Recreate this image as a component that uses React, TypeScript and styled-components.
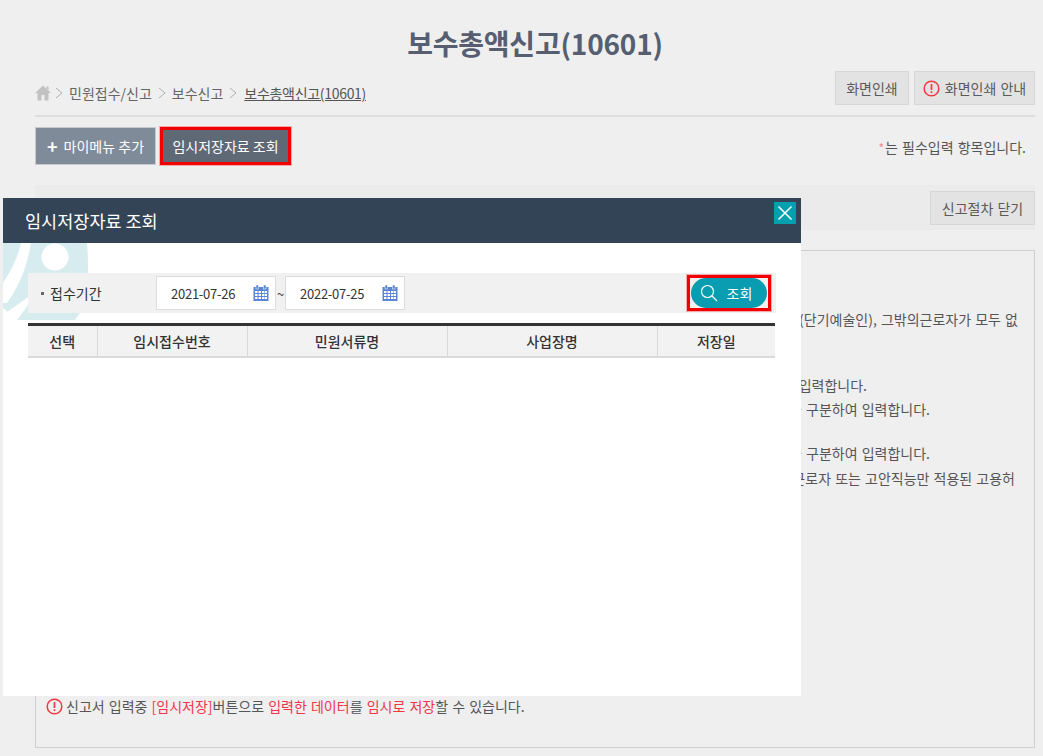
import React from 'react';
import styled, { createGlobalStyle } from 'styled-components';

const GlobalStyle = createGlobalStyle`
  html, body {
    margin: 0;
    padding: 0;
    background: #efefef;
  }
  * {
    box-sizing: border-box;
  }
  body {
    font-family: "Noto Sans CJK KR", "Noto Sans", sans-serif;
    font-size: 14px;
    color: #555;
  }
`;

const Page = styled.div`
  position: relative;
  width: 1043px;
  height: 756px;
  overflow: hidden;
  padding: 0 8px 0 35px;
  background: #efefef;
`;

const Title = styled.h1`
  margin: 0;
  height: 71px;
  padding-top: 22px;
  text-align: center;
  font-size: 28px;
  line-height: 42px;
  font-weight: 700;
  color: #565e70;
  letter-spacing: -0.2px;
`;

const TopRow = styled.div`
  display: flex;
  align-items: flex-start;
  justify-content: space-between;
  height: 46px;
  border-bottom: 2px solid #dedede;
`;

const Crumbs = styled.div`
  display: flex;
  align-items: center;
  gap: 6px;
  height: 44px;
  font-size: 14px;
  color: #666;
`;

const CurrentCrumb = styled.span`
  margin-left: 1px;
  color: #555;
  text-decoration: underline;
  letter-spacing: -0.3px;
`;

const GrayButton = styled.button`
  display: inline-flex;
  align-items: center;
  justify-content: center;
  gap: 5px;
  height: 34px;
  padding: 0;
  width: ${(p) => p.$w}px;
  background: #e3e3e3;
  border: 1px solid #d6d6d6;
  font: inherit;
  font-size: 14px;
  word-spacing: 1px;
  color: #5a5a5a;
`;

const PrintButtons = styled.div`
  display: flex;
  gap: 5px;
`;

const ActionRow = styled.div`
  display: flex;
  align-items: center;
  justify-content: space-between;
  height: 68px;
  padding: 0 9px 10px 0;
`;

const ActionButtons = styled.div`
  display: flex;
  align-items: center;
  gap: 3px;
`;

const MenuButton = styled.button`
  display: inline-flex;
  align-items: center;
  justify-content: center;
  gap: 6px;
  width: 121px;
  height: 38px;
  padding: 0;
  background: #7f8b99;
  border: 1px solid #c6c9cd;
  color: #fff;
  font: inherit;
  font-size: 14px;
`;

const Plus = styled.span`
  font-size: 18px;
  line-height: 18px;
  font-weight: 700;
`;

const TempButton = styled.button`
  width: 133px;
  height: 40px;
  padding: 0;
  background: #5f6875;
  border: 4px solid #f00000;
  outline: 1px solid #f5a9a9;
  outline-offset: -1px;
  color: #fff;
  font: inherit;
  font-size: 14px;
`;

const Required = styled.div`
  margin-top: 2px;
  font-size: 14px;
  word-spacing: 1px;
  color: #555;
`;

const Star = styled.span`
  margin-right: 1px;
  font-size: 12px;
  color: #ee8a96;
`;

const StepBar = styled.div`
  display: flex;
  align-items: center;
  justify-content: flex-end;
  height: 45px;
  background: #ebebeb;
`;

const ContentBox = styled.div`
  display: flex;
  flex-direction: column;
  height: 498px;
  margin-top: 20px;
  border: 1px solid #ccd0d0;
  padding-bottom: 31px;
`;

const Line = styled.div`
  display: flex;
  justify-content: flex-end;
  white-space: nowrap;
  margin-top: ${(p) => p.$top}px;
  padding-right: ${(p) => p.$end}px;
  font-size: 14px;
  word-spacing: 1px;
  line-height: 20px;
  color: #555;
`;

const BottomNote = styled.div`
  display: flex;
  align-items: center;
  gap: 3px;
  margin-top: auto;
  padding-left: 10px;
  font-size: 14px;
  word-spacing: 1px;
  line-height: 20px;
  color: #555;
`;

const Red = styled.span`
  color: #f0344a;
`;

const Modal = styled.div`
  position: absolute;
  left: 3px;
  top: 198px;
  width: 798px;
  height: 498px;
  background: #fff;
`;

const ModalHead = styled.div`
  display: flex;
  align-items: center;
  justify-content: space-between;
  height: 45px;
  padding: 0 5px 0 22px;
  background: #334457;
  color: #fff;
  font-size: 17.5px;
`;

const CloseButton = styled.button`
  display: flex;
  align-items: center;
  justify-content: center;
  width: 22px;
  height: 22px;
  margin-top: -15px;
  padding: 0;
  border: 0;
  background: #00a0b0;
`;

const ModalBody = styled.div`
  position: relative;
  padding: 30px 25px 0;
`;

const Watermark = styled.svg`
  position: absolute;
  left: 0;
  top: 0;
`;

const SearchBar = styled.div`
  position: relative;
  display: flex;
  align-items: center;
  height: 40px;
  padding-right: 5px;
  background: #f1f1f1;
`;

const SearchLabel = styled.div`
  display: flex;
  align-items: center;
  gap: 6px;
  width: 128px;
  padding-left: 13px;
  font-size: 14px;
  color: #333;
`;

const Bullet = styled.i`
  width: 3px;
  height: 3px;
  background: #666;
`;

const DateBox = styled.div`
  display: flex;
  align-items: center;
  justify-content: space-between;
  width: 120px;
  height: 34px;
  padding: 0 6px 0 14px;
  background: #fff;
  border: 1px solid #dcdcdc;
  font-size: 13px;
  letter-spacing: -0.25px;
  color: #333;
`;

const Tilde = styled.span`
  width: 9px;
  text-align: center;
  font-size: 13px;
  color: #444;
`;

const SearchFrame = styled.div`
  display: flex;
  align-items: center;
  justify-content: center;
  width: 84px;
  height: 36px;
  margin-left: auto;
  border: 3px solid #f00000;
  outline: 1px solid #f5a9a9;
`;

const SearchButton = styled.button`
  display: flex;
  align-items: center;
  justify-content: center;
  gap: 9px;
  width: 76px;
  height: 30px;
  padding: 0 6px 0 0;
  border: 0;
  border-radius: 15px;
  background: #0a9cb0;
  color: #fff;
  font: inherit;
  font-size: 14px;
`;

const Table = styled.table`
  position: relative;
  width: 747px;
  margin-top: 10px;
  border-collapse: collapse;
  table-layout: fixed;
  border-top: 3px solid #333;
`;

const HeadCell = styled.th`
  height: 32px;
  width: ${(p) => p.$w}px;
  padding: 0;
  background: #f2f2f2;
  border-bottom: 2px solid #dadada;
  border-right: 1px solid #dadada;
  font-size: 14px;
  font-weight: 500;
  color: #333;
  &:last-child {
    border-right: 0;
  }
`;

const HomeIcon = () => (
  <svg width="16" height="16" viewBox="0 0 16 16" style={{ marginRight: -2 }}>
    <path d="M8 .5 0 8h2.500v7.500h4V10h3v5.500h4V8H16z" fill="#c2c2c2" />
    <path d="M11.500 1.500h2v4l-2-2z" fill="#c2c2c2" />
  </svg>
);

const Chevron = () => (
  <svg width="8" height="12" viewBox="0 0 8 12">
    <path d="M1 1l6 5-6 5" fill="none" stroke="#b0b0b0" strokeWidth="1" />
  </svg>
);

const AlertIcon = ({ size = 17 }: { size?: number }) => (
  <svg width={size} height={size} viewBox="0 0 17 17">
    <circle cx="8.500" cy="8.500" r="7.300" fill="none" stroke="#ee3a44" strokeWidth="1.500" />
    <path d="M8.500 4v6" stroke="#ee3a44" strokeWidth="1.700" />
    <path d="M8.500 11.300v1.700" stroke="#ee3a44" strokeWidth="1.700" />
  </svg>
);

const CalendarIcon = () => (
  <svg width="16" height="16" viewBox="0 0 16 16">
    <rect x="0.500" y="2" width="15" height="14" fill="#5b84d6" />
    <rect x="3" y="0" width="2.500" height="4" fill="#5b84d6" stroke="#fff" strokeWidth="0.500" />
    <rect x="10.500" y="0" width="2.500" height="4" fill="#5b84d6" stroke="#fff" strokeWidth="0.500" />
    <path
      d="M2 6h2.500v2H2zM5.500 6H8v2H5.500zM9 6h2.500v2H9zM12 6h2v2h-2zM2 9h2.500v2H2zM5.500 9H8v2H5.500zM9 9h2.500v2H9zM12 9h2v2h-2zM2 12h2.500v2H2zM5.500 12H8v2H5.500zM9 12h2.500v2H9zM12 12h2v2h-2z"
      fill="#fff"
    />
  </svg>
);

const SearchIcon = () => (
  <svg width="18" height="18" viewBox="0 0 18 18">
    <circle cx="7.500" cy="7.500" r="6" fill="none" stroke="#fff" strokeWidth="1.200" />
    <path d="M12 12l5 5" stroke="#fff" strokeWidth="1.200" />
  </svg>
);

export default function App() {
  return (
    <Page>
      <GlobalStyle />
      <Title>보수총액신고(10601)</Title>
      <TopRow>
        <Crumbs>
          <HomeIcon />
          <Chevron />
          <span>민원접수/신고</span>
          <Chevron />
          <span>보수신고</span>
          <Chevron />
          <CurrentCrumb>보수총액신고(10601)</CurrentCrumb>
        </Crumbs>
        <PrintButtons>
          <GrayButton $w={74}>화면인쇄</GrayButton>
          <GrayButton $w={121}>
            <AlertIcon />
            화면인쇄 안내
          </GrayButton>
        </PrintButtons>
      </TopRow>
      <ActionRow>
        <ActionButtons>
          <MenuButton>
            <Plus>+</Plus>
            마이메뉴 추가
          </MenuButton>
          <TempButton>임시저장자료 조회</TempButton>
        </ActionButtons>
        <Required>
          <Star>*</Star>는 필수입력 항목입니다.
        </Required>
      </ActionRow>
      <StepBar>
        <GrayButton $w={105}>신고절차 닫기</GrayButton>
      </StepBar>
      <ContentBox>
        <Line $top={58} $end={16}>
          사업장에 일반근로자, 일용근로자, 예술인(단기예술인), 그밖의근로자가 모두 없
        </Line>
        <Line $top={46} $end={167}>
          보수총액은 해당 연도에 지급한 금액을 입력합니다.
        </Line>
        <Line $top={4} $end={104}>
          일반근로자 보수총액은 고용보험과 산재보험을 구분하여 입력합니다.
        </Line>
        <Line $top={24} $end={104}>
          그밖의근로자 보수총액은 고용보험과 산재보험을 구분하여 입력합니다.
        </Line>
        <Line $top={5} $end={19}>
          일용근로자 또는 고안직능만 적용된 고용허
        </Line>
        <BottomNote>
          <AlertIcon />
          <span>
            신고서 입력중 <Red>[임시저장]</Red>버튼으로 <Red>입력한 데이터</Red>를{' '}
            <Red>임시로 저장</Red>할 수 있습니다.
          </span>
        </BottomNote>
      </ContentBox>

      <Modal>
        <ModalHead>
          <span>임시저장자료 조회</span>
          <CloseButton aria-label="닫기">
            <svg width="16" height="16" viewBox="0 0 16 16">
              <path d="M1.500 1.500l13 13M14.500 1.500l-13 13" stroke="#fff" strokeWidth="1.500" />
            </svg>
          </CloseButton>
        </ModalHead>
        <ModalBody>
          <Watermark width="88" height="80" viewBox="0 0 88 80">
            <path d="M0 0H84C86 25 85 50 82 62L72 77H15L0 65Z" fill="#d6ecef" />
            <path d="M18 0H28C24 25 15 45 4 60H0V40C8 28 15 14 18 0Z" fill="#fff" />
            <path d="M0 72L28 52V58L15 76 0 80Z" fill="#fff" />
            <circle cx="52" cy="14" r="13.500" fill="#fff" />
          </Watermark>
          <SearchBar>
            <SearchLabel>
              <Bullet />
              접수기간
            </SearchLabel>
            <DateBox>
              2021-07-26
              <CalendarIcon />
            </DateBox>
            <Tilde>~</Tilde>
            <DateBox>
              2022-07-25
              <CalendarIcon />
            </DateBox>
            <SearchFrame>
              <SearchButton>
                <SearchIcon />
                조회
              </SearchButton>
            </SearchFrame>
          </SearchBar>
          <Table>
            <thead>
              <tr>
                <HeadCell $w={69}>선택</HeadCell>
                <HeadCell $w={150}>임시접수번호</HeadCell>
                <HeadCell $w={200}>민원서류명</HeadCell>
                <HeadCell $w={210}>사업장명</HeadCell>
                <HeadCell $w={118}>저장일</HeadCell>
              </tr>
            </thead>
          </Table>
        </ModalBody>
      </Modal>
    </Page>
  );
}
